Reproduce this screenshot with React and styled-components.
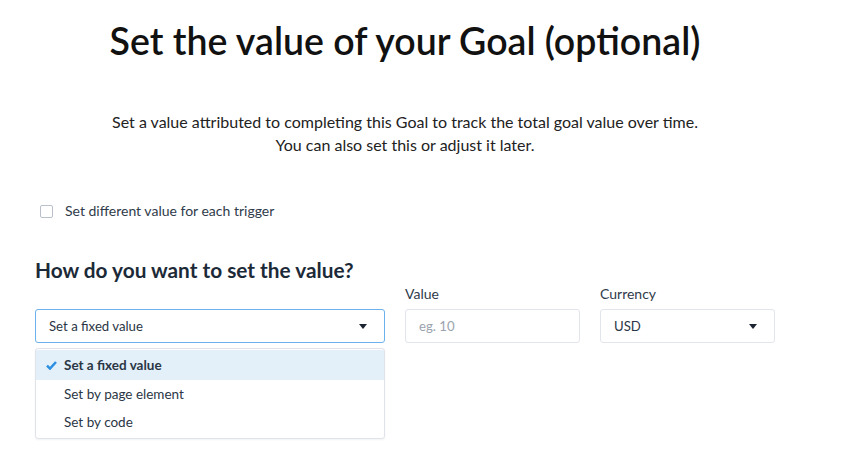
import styled, { createGlobalStyle } from "styled-components";

const GlobalStyle = createGlobalStyle`
  body {
    margin: 0;
    background: #ffffff;
    font-family: "Lato", "Open Sans", sans-serif;
    color: #1d2b3a;
  }
`;

const Page = styled.div`
  width: 740px;
  min-height: 475px;
  padding: 0 35px;
`;

const Title = styled.h1`
  margin: 20px 0 0;
  text-align: center;
  font-size: 37.5px;
  line-height: 42px;
  font-weight: 600;
  color: #111111;
`;

const Intro = styled.p`
  margin: 48px 0 0;
  text-align: center;
  font-size: 16px;
  line-height: 23px;
  color: #222222;
`;

const CheckRow = styled.label`
  display: flex;
  align-items: center;
  gap: 12px;
  margin: 46px 0 0 5px;
  font-size: 14px;
  line-height: 18px;
  color: #2f3b4a;
`;

const Box = styled.span`
  width: 11px;
  height: 11px;
  border: 1px solid #b9c0ca;
  border-radius: 2px;
`;

const Heading = styled.h2`
  margin: 38px 0 0;
  font-size: 20.8px;
  line-height: 24px;
  font-weight: 700;
  color: #1c2a38;
`;

const Fields = styled.div`
  display: grid;
  grid-template-columns: 350px 175px 175px;
  align-items: start;
  column-gap: 20px;
  row-gap: 6px;
  margin-top: 3px;
`;

const Label = styled.div`
  font-size: 14px;
  line-height: 18px;
  color: #2f3b4a;
`;

const SelectWrap = styled.div`
  display: flex;
  flex-direction: column;
  gap: 5px;
`;

const Control = styled.div`
  box-sizing: border-box;
  height: 34px;
  display: flex;
  align-items: center;
  justify-content: space-between;
  padding: 0 17px 0 13px;
  border: 1px solid ${(p) => (p.$active ? "#6cb2ec" : "#e2e5eb")};
  border-radius: 3px;
  font-size: 13.2px;
  color: ${(p) => (p.$placeholder ? "#9aa3ae" : "#2a3645")};
`;

const Caret = styled.span`
  width: 0;
  height: 0;
  border-left: 4.5px solid transparent;
  border-right: 4.5px solid transparent;
  border-top: 5px solid #1b2430;
`;

const Menu = styled.ul`
  margin: 0;
  padding: 1px 0 2px;
  list-style: none;
  background: #ffffff;
  border: 1px solid #e0e3ea;
  border-radius: 3px;
  box-shadow: 0 1px 2px rgba(30, 45, 70, 0.06);
`;

const Option = styled.li`
  height: ${(p) => (p.$selected ? "30px" : "28px")};
  display: flex;
  align-items: center;
  gap: 7px;
  padding-left: ${(p) => (p.$selected ? "10px" : "28px")};
  font-size: 13.5px;
  font-weight: ${(p) => (p.$selected ? 700 : 400)};
  color: #2a3645;
  background: ${(p) => (p.$selected ? "#e3f0fa" : "transparent")};
`;

export default function App() {
  return (
    <>
      <GlobalStyle />
      <Page>
        <Title>Set the value of your Goal (optional)</Title>
        <Intro>
          Set a value attributed to completing this Goal to track the total goal value over time.
          <br />
          You can also set this or adjust it later.
        </Intro>
        <CheckRow>
          <Box />
          Set different value for each trigger
        </CheckRow>
        <Heading>How do you want to set the value?</Heading>
        <Fields>
          <div />
          <Label>Value</Label>
          <Label>Currency</Label>
          <SelectWrap>
            <Control $active>
              Set a fixed value
              <Caret />
            </Control>
            <Menu>
              <Option $selected>
                <svg width="11" height="9" viewBox="0 0 11 9">
                  <path d="M1 4.6 L4 7.6 L10 1" fill="none" stroke="#2c8fe2" strokeWidth="2.5" />
                </svg>
                Set a fixed value
              </Option>
              <Option>Set by page element</Option>
              <Option>Set by code</Option>
            </Menu>
          </SelectWrap>
          <Control $placeholder>eg. 10</Control>
          <Control>
            USD
            <Caret />
          </Control>
        </Fields>
      </Page>
    </>
  );
}
